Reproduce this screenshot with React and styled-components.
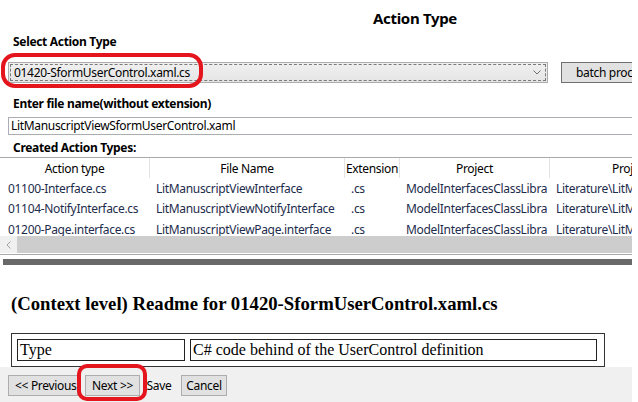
import React from "react";
import styled, { createGlobalStyle } from "styled-components";

const GlobalStyle = createGlobalStyle`
  html, body { margin: 0; padding: 0; background: #fff; }
  body { font-family: "Noto Sans", "Segoe UI", sans-serif; font-size: 12px; color: #000; letter-spacing: -0.32px; }
  * { box-sizing: border-box; }
`;

const Frame = styled.div`
  position: relative;
  width: 632px;
  height: 402px;
  overflow: hidden;
  display: flex;
  flex-direction: column;
  background: #fff;
`;

const TopPanel = styled.div`
  height: 265px;
  flex: none;
  overflow: hidden;
`;

const Inner = styled.div`
  width: 830px;
  display: flex;
  flex-direction: column;
`;

const Title = styled.div`
  margin-top: 7px;
  height: 22px;
  line-height: 22px;
  font-size: 15px;
  font-weight: 700;
  text-align: center;
`;

const Label = styled.div`
  margin-top: ${(p) => p.$mt}px;
  padding-left: 13px;
  height: 16px;
  line-height: 16px;
  font-size: 12px;
  font-weight: 700;
`;

const ComboRow = styled.div`
  margin-top: 12px;
  display: flex;
  align-items: center;
  padding-left: 8px;
  gap: 13px;
`;

const Combo = styled.div`
  position: relative;
  width: 540px;
  height: 21px;
  border: 1px solid #acacac;
  background: linear-gradient(#f0f0f0, #e5e5e5);
  padding: 1px;
`;

const FocusRect = styled.div`
  height: 100%;
  border: 1px dashed #7a7a7a;
  display: flex;
  align-items: center;
  justify-content: space-between;
  padding: 0 4px 0 3px;
  font-size: 12px;
  line-height: 16px;
`;

const Button = styled.div`
  height: ${(p) => p.$h || 21}px;
  width: ${(p) => p.$w}px;
  border: 1px solid ${(p) => (p.$flat ? "transparent" : "#adadad")};
  background: ${(p) => (p.$flat ? "transparent" : "#e1e1e1")};
  display: flex;
  align-items: center;
  justify-content: ${(p) => (p.$left ? "flex-start" : "center")};
  padding-left: ${(p) => p.$pl || 0}px;
  font-size: 12px;
  white-space: nowrap;
  overflow: hidden;
  flex: none;
`;

const BatchButton = styled(Button)`
  border-color: #707070;
`;

const TextBox = styled.div`
  margin-top: 5px;
  margin-left: 8px;
  height: 18px;
  border: 1px solid #abadb3;
  padding-left: 2px;
  line-height: 16px;
  font-size: 12px;
`;

const Grid = styled.div`
  margin-top: 1px;
  border-top: 1px solid #a9a9a9;
  border-bottom: 1px solid #a9a9a9;
  width: 632px;
  padding-bottom: 1px;
`;

const GridRow = styled.div`
  display: grid;
  grid-template-columns: 150px 195px 55px 150px 160px;
  height: ${(p) => p.$h}px;
  align-items: center;
  white-space: nowrap;
`;

const HeadCell = styled.div`
  height: 100%;
  border-right: 1px solid #e3e3e3;
  display: flex;
  align-items: center;
  justify-content: ${(p) => (p.$start ? "flex-start" : "center")};
  padding-left: ${(p) => (p.$start ? 62 : 0)}px;
  overflow: hidden;
  font-size: 12px;
`;

const Cell = styled.div`
  padding-left: ${(p) => p.$pl || 6}px;
  overflow: hidden;
  color: #1d2c4c;
  font-size: 12px;
`;

const Rows = styled.div`
  height: 58px;
  overflow: hidden;
`;

const HScroll = styled.div`
  height: 17px;
  display: flex;
  background: #f0f0f0;
`;

const ScrollArrow = styled.div`
  width: 17px;
  display: flex;
  align-items: center;
  justify-content: center;
`;

const ScrollThumb = styled.div`
  flex: 1;
  background: #cdcdcd;
`;

const Splitter = styled.div`
  margin: 4px 0 0 3px;
  width: 629px;
  height: 6px;
  background: #696969;
`;

const HtmlPane = styled.div`
  height: 102px;
  flex: none;
  overflow: hidden;
  padding: 28px 0 0 11px;
  font-family: "Liberation Serif", "Times New Roman", serif;
  letter-spacing: 0;
`;

const Heading = styled.h3`
  margin: 0;
  font-size: 18.72px;
  line-height: 22px;
  font-weight: 700;
  white-space: nowrap;
`;

const ReadmeTable = styled.div`
  margin-top: 18px;
  width: 594px;
  border: 1px solid #333;
  padding: 5px 7px 5px 5px;
  display: flex;
  gap: 5px;
`;

const ReadmeCell = styled.div`
  width: ${(p) => p.$w}px;
  height: 22px;
  border: 1px solid #222;
  padding: 0 2px;
  font-size: 16px;
  line-height: 20px;
  white-space: nowrap;
  overflow: hidden;
`;

const BottomBar = styled.div`
  height: 35px;
  flex: none;
  background: #f0f0f0;
  display: flex;
  align-items: flex-start;
  padding: 8px 0 0 8px;
`;

const Gap = styled.div`
  width: ${(p) => p.$w}px;
  flex: none;
`;

const Annotation = styled.div`
  position: absolute;
  left: ${(p) => p.$x}px;
  top: ${(p) => p.$y}px;
  width: ${(p) => p.$w}px;
  height: ${(p) => p.$h}px;
  border: 4px solid #e4151d;
  border-radius: ${(p) => p.$r}px;
  pointer-events: none;
`;

const rows = [
  ["01100-Interface.cs", "LitManuscriptViewInterface", ".cs", "ModelInterfacesClassLibra", "Literature\\LitManuscript"],
  ["01104-NotifyInterface.cs", "LitManuscriptViewNotifyInterface", ".cs", "ModelInterfacesClassLibra", "Literature\\LitManuscript"],
  ["01200-Page.interface.cs", "LitManuscriptViewPage.interface", ".cs", "ModelInterfacesClassLibra", "Literature\\LitManuscript"],
];

const headers = ["Action type", "File Name", "Extension", "Project"];

export default function App() {
  return (
    <Frame>
      <GlobalStyle />
      <TopPanel>
        <Inner>
          <Title>Action Type</Title>
          <Label $mt={5}>Select Action Type</Label>
          <ComboRow>
            <Combo>
              <FocusRect>
                <span>01420-SformUserControl.xaml.cs</span>
                <svg width="8" height="5" viewBox="0 0 8 5">
                  <path d="M0.5 0.5 L4 4 L7.5 0.5" fill="none" stroke="#707070" strokeWidth="1" />
                </svg>
              </FocusRect>
            </Combo>
            <BatchButton $w={200} $left $pl={14}>batch processing</BatchButton>
          </ComboRow>
          <Label $mt={13}>Enter file name(without extension)</Label>
          <TextBox>LitManuscriptViewSformUserControl.xaml</TextBox>
          <Label $mt={5}>Created Action Types:</Label>
          <Grid>
            <GridRow $h={20}>
              {headers.map((h) => (
                <HeadCell key={h}>{h}</HeadCell>
              ))}
              <HeadCell $start>Project path</HeadCell>
            </GridRow>
            <Rows>
              {rows.map((r) => (
                <GridRow $h={20.5} key={r[0]}>
                  {r.map((c, i) => (
                    <Cell key={i} $pl={i === 0 ? 8 : 6}>{c}</Cell>
                  ))}
                </GridRow>
              ))}
            </Rows>
            <HScroll>
              <ScrollArrow>
                <svg width="5" height="8" viewBox="0 0 5 8">
                  <path d="M4.5 0.5 L1 4 L4.5 7.5" fill="none" stroke="#a0a0a0" strokeWidth="1" />
                </svg>
              </ScrollArrow>
              <ScrollThumb />
            </HScroll>
          </Grid>
          <Splitter />
        </Inner>
      </TopPanel>
      <HtmlPane>
        <Heading>(Context level) Readme for 01420-SformUserControl.xaml.cs</Heading>
        <ReadmeTable>
          <ReadmeCell $w={168}>Type</ReadmeCell>
          <ReadmeCell $w={407}>C# code behind of the UserControl definition</ReadmeCell>
        </ReadmeTable>
      </HtmlPane>
      <BottomBar>
        <Button $w={70} $left $pl={6}>&lt;&lt; Previous</Button>
        <Gap $w={7} />
        <Button $w={55}>Next &gt;&gt;</Button>
        <Gap $w={2} />
        <Button $w={34} $flat>Save</Button>
        <Gap $w={5} />
        <Button $w={46}>Cancel</Button>
      </BottomBar>
      <Annotation $x={1} $y={53} $w={202} $h={35} $r={14} />
      <Annotation $x={77} $y={364} $w={70} $h={37} $r={10} />
    </Frame>
  );
}
